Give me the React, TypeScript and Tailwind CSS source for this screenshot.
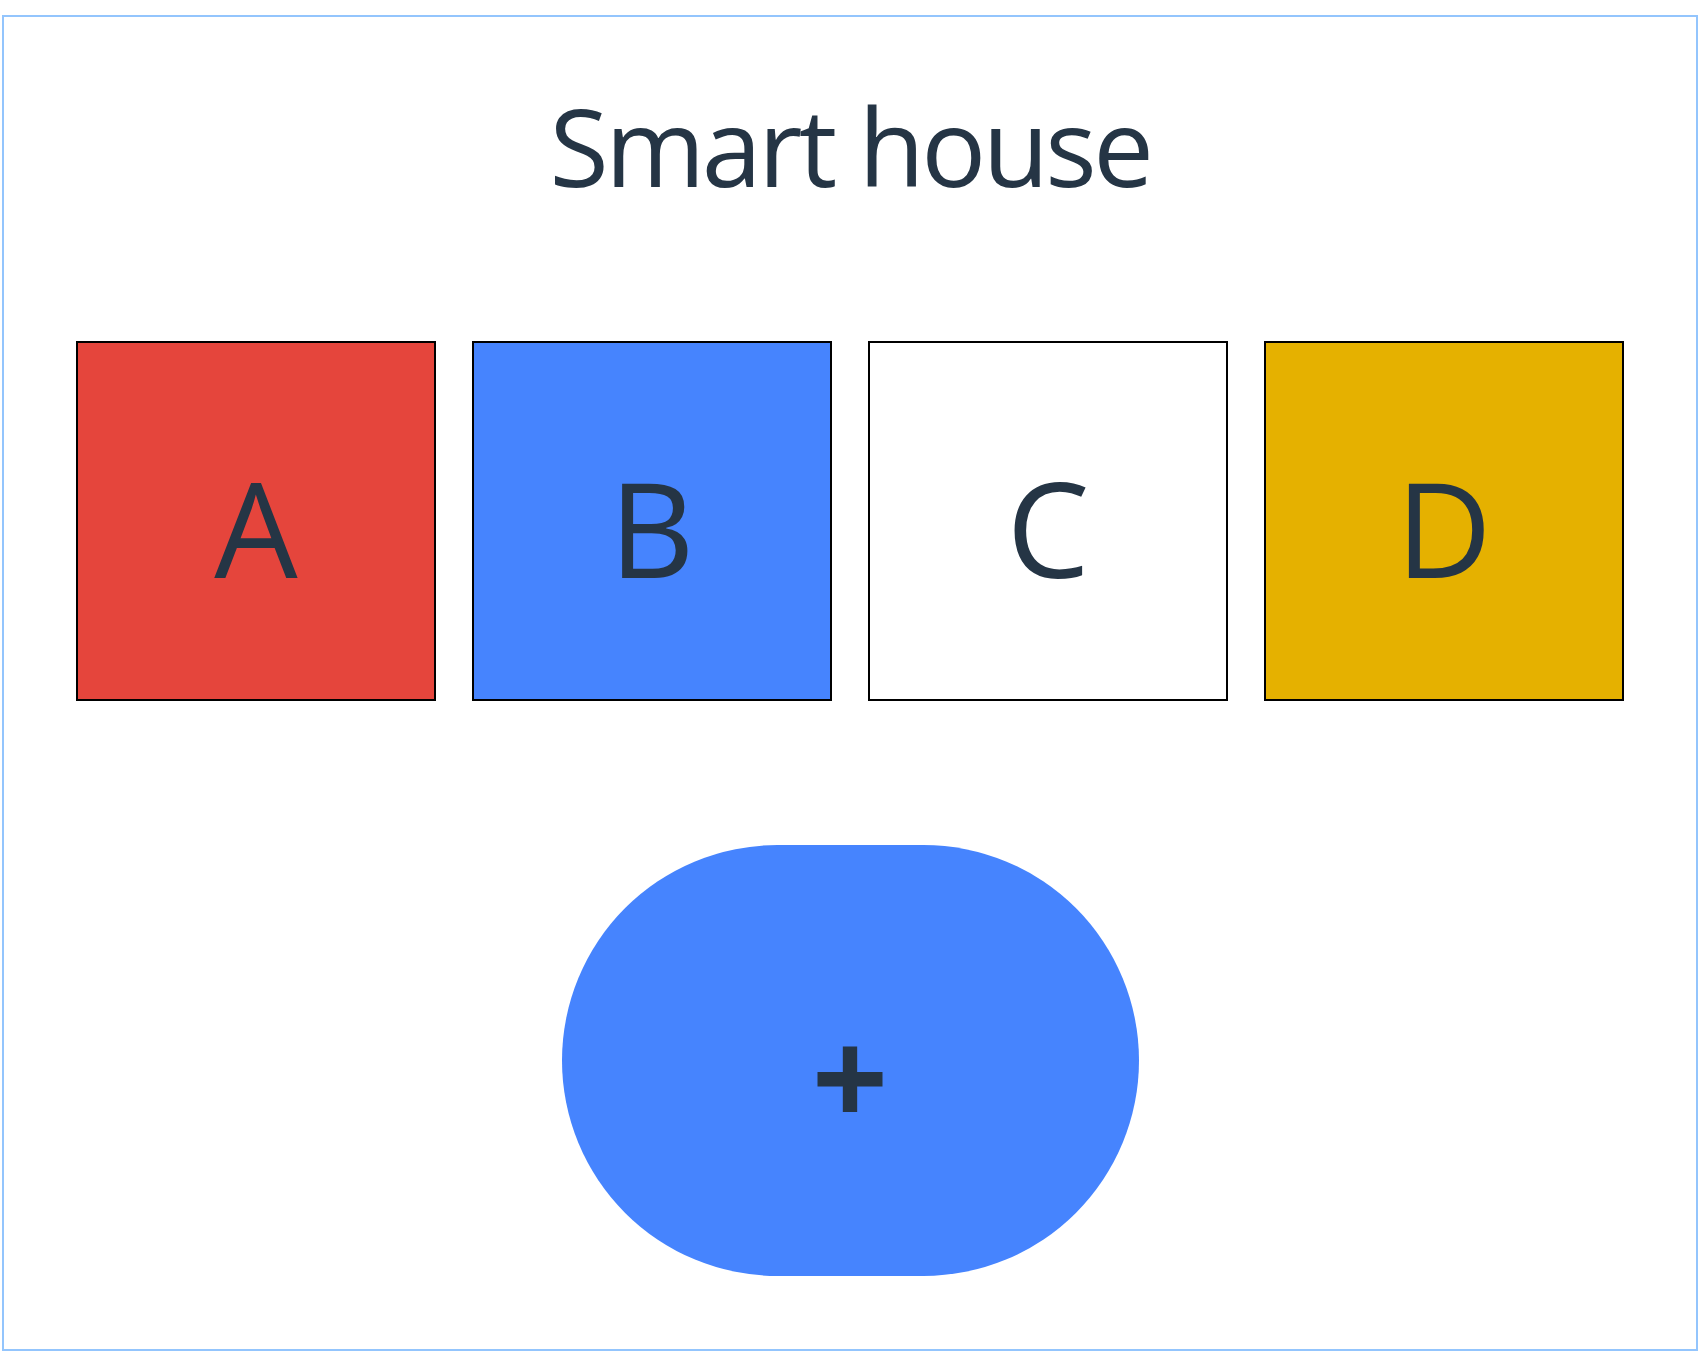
import React from 'react';

const rooms = [
	{ label: 'A', bg: 'bg-[#e5453c]' },
	{ label: 'B', bg: 'bg-[#4684fe]' },
	{ label: 'C', bg: 'bg-white' },
	{ label: 'D', bg: 'bg-[#e5b100]' },
];

const App: React.FC = () => {
	return (
		<div className="pt-[15px] pl-[2px]" style={{ fontFamily: '"Open Sans", "Noto Sans", sans-serif' }}>
			<div className="w-[1696px] h-[1336px] border-2 border-[#93c5fd] flex flex-col items-center text-[#253545]">
				<h1 className="mt-[64px] text-[108px] leading-[130px] font-normal tracking-[-3.5px]">
					Smart house
				</h1>

				<div className="mt-[130px] flex gap-[36px]">
					{rooms.map((room) => (
						<div
							key={room.label}
							className={`w-[360px] h-[360px] border-2 border-black flex items-center justify-center text-[132px] leading-none ${room.bg}`}
						>
							<span className="pt-[11px]">{room.label}</span>
						</div>
					))}
				</div>

				<button
					type="button"
					className="mt-[144px] w-[577px] h-[431px] rounded-full bg-[#4684fe] flex items-center justify-center text-[134px] font-bold leading-none text-[#253545]"
				>
					<span className="pt-[28px]">+</span>
				</button>
			</div>
		</div>
	);
};

export default App;
